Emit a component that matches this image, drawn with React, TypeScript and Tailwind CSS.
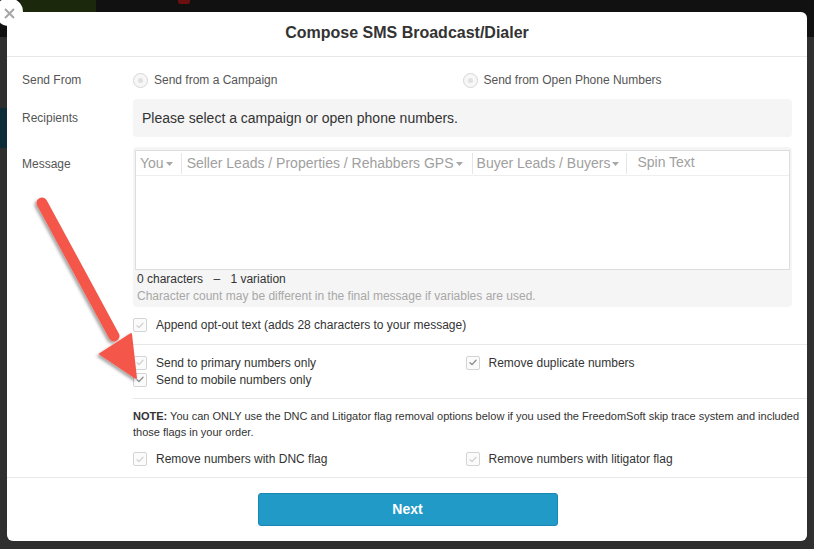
import React from 'react';

const font = { fontFamily: '"Liberation Sans", Arial, Helvetica, sans-serif' };

function Radio() {
  return (
    <span className="flex h-[15px] w-[15px] shrink-0 items-center justify-center rounded-full border border-[#d6d6d6] bg-[#f7f7f7]">
      <span className="h-[5px] w-[5px] rounded-full bg-[#e0e0e0]"></span>
    </span>
  );
}

function Check({ dark = false }: { dark?: boolean }) {
  return (
    <span className="flex h-[14px] w-[14px] shrink-0 items-center justify-center rounded-[2px] border border-[#d4d4d4] bg-[#fbfbfb]">
      <svg width="8" height="7" viewBox="0 0 8 7" fill="none">
        <path
          d="M1 3.8 L3 5.6 L7 1.2"
          stroke={dark ? '#8a8a8a' : '#d2d2d2'}
          strokeWidth="1.3"
          strokeLinecap="round"
          strokeLinejoin="round"
        />
      </svg>
    </span>
  );
}

function CheckRow({ label, dark = false, className = '' }: { label: string; dark?: boolean; className?: string }) {
  return (
    <div className={`flex items-center gap-[9px] text-[12px] text-[#333] ${className}`}>
      <Check dark={dark} />
      <span>{label}</span>
    </div>
  );
}

function Caret() {
  return (
    <svg width="7" height="4" viewBox="0 0 7 4" className="ml-[2px] mt-[2px]">
      <path d="M0 0 L7 0 L3.5 4 Z" fill="#a8a8a8" />
    </svg>
  );
}

export default function App() {
  return (
    <div className="relative h-[549px] w-[814px] overflow-hidden bg-[#2f2f2f]" style={font}>
      {/* page behind the dialog */}
      <div className="flex h-[37px] bg-[#111111]">
        <div className="ml-[20px] h-full w-[76px] bg-[#1c280c]"></div>
        <div className="ml-[82px] mt-0 h-[4px] w-[12px] rounded-b-[2px] bg-[#6b1010]"></div>
      </div>
      <div className="mt-[71px] h-[40px] w-[7px] bg-[#0c2c38]"></div>

      {/* dialog */}
      <div className="absolute left-[7px] top-[12px] w-[800px] rounded-[6px] bg-white">
        <div className="flex h-[45px] items-center justify-center border-b border-[#e8e8e8] pb-[2px]">
          <h3 className="text-[16px] font-bold text-[#333]">Compose SMS Broadcast/Dialer</h3>
        </div>

        <div className="pl-[15px]">
          {/* Send From */}
          <div className="mt-[13px] flex h-[20px] items-center">
            <label className="w-[111px] text-[12px] text-[#555]">Send From</label>
            <div className="grid flex-1 grid-cols-2 pr-[15px] text-[12px] text-[#555]">
              <div className="flex items-center gap-[6px]">
                <Radio />
                <span>Send from a Campaign</span>
              </div>
              <div className="flex items-center gap-[6px]">
                <Radio />
                <span>Send from Open Phone Numbers</span>
              </div>
            </div>
          </div>

          {/* Recipients */}
          <div className="mt-[9px] flex h-[38px] items-center">
            <label className="w-[111px] text-[12px] text-[#555]">Recipients</label>
            <div className="mr-[15px] flex h-full flex-1 items-center rounded-[4px] bg-[#f5f5f5] pl-[9px] text-[14px] text-[#333]">
              Please select a campaign or open phone numbers.
            </div>
          </div>

          {/* Message */}
          <div className="mt-[10px] flex">
            <label className="w-[111px] pt-[9px] text-[12px] leading-[17px] text-[#555]">Message</label>
            <div className="mr-[15px] h-[160px] flex-1 rounded-[4px] bg-[#f5f5f5] px-[2px] pt-[3px]">
              <div className="h-[120px] border border-[#dddddd] bg-white">
                <div className="flex h-[25px] items-center border-b border-[#eeeeee] text-[14px] text-[#a0a0a0]">
                  <div className="flex items-center border-r border-[#e6e6e6] pl-[4px] pr-[8px]">
                    You
                    <Caret />
                  </div>
                  <div className="flex items-center border-r border-[#e6e6e6] pl-[5px] pr-[9px]">
                    Seller Leads / Properties / Rehabbers GPS
                    <Caret />
                  </div>
                  <div className="flex items-center border-r border-[#e6e6e6] pl-[4px] pr-[7px]">
                    Buyer Leads / Buyers
                    <Caret />
                  </div>
                  <div className="-mt-[2px] pl-[10px]">Spin Text</div>
                </div>
              </div>
              <div className="pl-[2px] pt-[1px] text-[12px] leading-[16px]">
                <div className="text-[#333]">
                  0 characters <span className="mx-[7px]">–</span> 1 variation
                </div>
                <div className="mt-[1px] text-[#a8a8a8]">
                  Character count may be different in the final message if variables are used.
                </div>
              </div>
            </div>
          </div>

          {/* Options */}
          <div className="ml-[111px]">
            <CheckRow className="mt-[11px] h-[14px]" label="Append opt-out text (adds 28 characters to your message)" />

            <div className="mt-[12px] h-px bg-[#e8e8e8]"></div>

            <div className="mt-[9px] grid grid-cols-2 pr-[15px]">
              <div>
                <CheckRow className="h-[17px]" label="Send to primary numbers only" />
                <CheckRow className="h-[17px]" dark label="Send to mobile numbers only" />
              </div>
              <div className="pl-[3px]">
                <CheckRow className="h-[17px]" dark label="Remove duplicate numbers" />
              </div>
            </div>

            <div className="mt-[10px] h-px bg-[#e8e8e8]"></div>

            <p className="mt-[9px] pr-[15px] text-[11px] leading-[16px] text-[#333]">
              <span className="block whitespace-nowrap">
                <b>NOTE:</b> You can ONLY use the DNC and Litigator flag removal options below if you used the FreedomSoft skip trace system and included
              </span>
              <span className="block">those flags in your order.</span>
            </p>

            <div className="mt-[12px] grid grid-cols-2 pr-[15px]">
              <CheckRow className="h-[14px]" label="Remove numbers with DNC flag" />
              <div className="pl-[3px]">
                <CheckRow className="h-[14px]" label="Remove numbers with litigator flag" />
              </div>
            </div>
          </div>
        </div>

        {/* footer */}
        <div className="mt-[11px] flex justify-center border-t border-[#e8e8e8] pb-[15px] pt-[15px]">
          <button
            type="button"
            className="ml-[1px] h-[33px] w-[300px] rounded-[3px] border border-[#1a86b3] bg-[#219ac8] text-[14px] font-bold text-white"
          >
            Next
          </button>
        </div>
      </div>

      {/* close button */}
      <div className="absolute left-[-5px] top-[-2px] flex h-[28px] w-[28px] items-center justify-center rounded-full bg-white">
        <svg width="11" height="11" viewBox="0 0 11 11" className="mt-[3px]">
          <path d="M1 1 L10 10 M10 1 L1 10" stroke="#a6a6a6" strokeWidth="2" />
        </svg>
      </div>

      {/* annotation arrow */}
      <svg className="pointer-events-none absolute left-0 top-0" width="814" height="549" viewBox="0 0 814 549">
        <defs>
          <filter id="sh" x="-20%" y="-20%" width="140%" height="140%">
            <feDropShadow dx="-2" dy="2" stdDeviation="1.5" floodColor="#000" floodOpacity="0.35" />
          </filter>
        </defs>
        <g filter="url(#sh)" fill="#f4574a" stroke="#f4574a">
          <line x1="42" y1="203" x2="114" y2="336" strokeWidth="11" strokeLinecap="round" />
          <polygon points="136,378 100,354 131,334" strokeWidth="2" strokeLinejoin="round" />
        </g>
      </svg>
    </div>
  );
}
